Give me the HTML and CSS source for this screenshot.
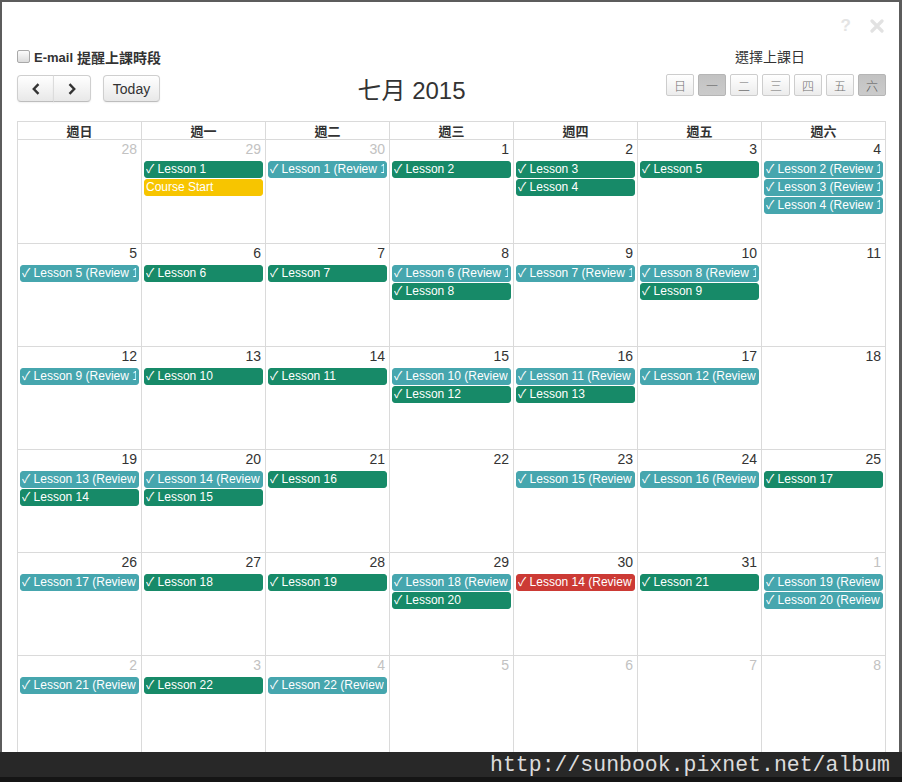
FILE: index.html
```html
<!DOCTYPE html>
<html lang="zh-Hant">
<head>
<meta charset="utf-8">
<title>選擇上課日</title>
<link rel="stylesheet" href="styles.css">
</head>
<body>
<div class="modal">
  <div class="topbar">
    <span class="help">?</span>
    <svg class="close" width="14" height="14" viewBox="0 0 14 14"><path d="M2 2L12 12M12 2L2 12" stroke="#e2e2e2" stroke-width="3.2" stroke-linecap="round"/></svg>
  </div>
  <div class="toolbar">
    <div class="tb-left">
      <label class="remind"><span class="cb"></span><b>E-mail</b> 提醒上課時段</label>
      <div class="navrow">
        <div class="group">
          <span class="btn nav"><svg width="8" height="12" viewBox="0 0 8 12"><path d="M6.5 1.2L1.8 6L6.5 10.8" fill="none" stroke="#333" stroke-width="2.4"/></svg></span>
          <span class="btn nav"><svg width="8" height="12" viewBox="0 0 8 12"><path d="M1.5 1.2L6.2 6L1.5 10.8" fill="none" stroke="#333" stroke-width="2.4"/></svg></span>
        </div>
        <span class="btn today">Today</span>
      </div>
    </div>
    <h2 class="title">七月 2015</h2>
    <div class="tb-right">
      <div class="pick-label">選擇上課日</div>
      <div class="days">
        <span class="dbtn">日</span>
        <span class="dbtn on">一</span>
        <span class="dbtn">二</span>
        <span class="dbtn">三</span>
        <span class="dbtn">四</span>
        <span class="dbtn">五</span>
        <span class="dbtn on">六</span>
      </div>
    </div>
  </div>

  <div class="cal">
    <div class="th">週日</div><div class="th">週一</div><div class="th">週二</div><div class="th">週三</div><div class="th">週四</div><div class="th">週五</div><div class="th">週六</div>

    <div class="day other"><div class="num">28</div></div>
    <div class="day other"><div class="num">29</div><div class="ev g"><span class="tx">✓ Lesson 1</span></div><div class="ev y"><span class="tx">Course Start</span></div></div>
    <div class="day other"><div class="num">30</div><div class="ev t"><span class="tx">✓ Lesson 1 (Review 1)</span></div></div>
    <div class="day"><div class="num">1</div><div class="ev g"><span class="tx">✓ Lesson 2</span></div></div>
    <div class="day"><div class="num">2</div><div class="ev g"><span class="tx">✓ Lesson 3</span></div><div class="ev g"><span class="tx">✓ Lesson 4</span></div></div>
    <div class="day"><div class="num">3</div><div class="ev g"><span class="tx">✓ Lesson 5</span></div></div>
    <div class="day"><div class="num">4</div><div class="ev t"><span class="tx">✓ Lesson 2 (Review 1)</span></div><div class="ev t"><span class="tx">✓ Lesson 3 (Review 1)</span></div><div class="ev t"><span class="tx">✓ Lesson 4 (Review 1)</span></div></div>

    <div class="day"><div class="num">5</div><div class="ev t"><span class="tx">✓ Lesson 5 (Review 1)</span></div></div>
    <div class="day"><div class="num">6</div><div class="ev g"><span class="tx">✓ Lesson 6</span></div></div>
    <div class="day"><div class="num">7</div><div class="ev g"><span class="tx">✓ Lesson 7</span></div></div>
    <div class="day"><div class="num">8</div><div class="ev t"><span class="tx">✓ Lesson 6 (Review 1)</span></div><div class="ev g"><span class="tx">✓ Lesson 8</span></div></div>
    <div class="day"><div class="num">9</div><div class="ev t"><span class="tx">✓ Lesson 7 (Review 1)</span></div></div>
    <div class="day"><div class="num">10</div><div class="ev t"><span class="tx">✓ Lesson 8 (Review 1)</span></div><div class="ev g"><span class="tx">✓ Lesson 9</span></div></div>
    <div class="day"><div class="num">11</div></div>

    <div class="day"><div class="num">12</div><div class="ev t"><span class="tx">✓ Lesson 9 (Review 1)</span></div></div>
    <div class="day"><div class="num">13</div><div class="ev g"><span class="tx">✓ Lesson 10</span></div></div>
    <div class="day"><div class="num">14</div><div class="ev g"><span class="tx">✓ Lesson 11</span></div></div>
    <div class="day"><div class="num">15</div><div class="ev t"><span class="tx">✓ Lesson 10 (Review 1)</span></div><div class="ev g"><span class="tx">✓ Lesson 12</span></div></div>
    <div class="day"><div class="num">16</div><div class="ev t"><span class="tx">✓ Lesson 11 (Review 1)</span></div><div class="ev g"><span class="tx">✓ Lesson 13</span></div></div>
    <div class="day"><div class="num">17</div><div class="ev t"><span class="tx">✓ Lesson 12 (Review 1)</span></div></div>
    <div class="day"><div class="num">18</div></div>

    <div class="day"><div class="num">19</div><div class="ev t"><span class="tx">✓ Lesson 13 (Review 1)</span></div><div class="ev g"><span class="tx">✓ Lesson 14</span></div></div>
    <div class="day"><div class="num">20</div><div class="ev t"><span class="tx">✓ Lesson 14 (Review 1)</span></div><div class="ev g"><span class="tx">✓ Lesson 15</span></div></div>
    <div class="day"><div class="num">21</div><div class="ev g"><span class="tx">✓ Lesson 16</span></div></div>
    <div class="day"><div class="num">22</div></div>
    <div class="day"><div class="num">23</div><div class="ev t"><span class="tx">✓ Lesson 15 (Review 1)</span></div></div>
    <div class="day"><div class="num">24</div><div class="ev t"><span class="tx">✓ Lesson 16 (Review 1)</span></div></div>
    <div class="day"><div class="num">25</div><div class="ev g"><span class="tx">✓ Lesson 17</span></div></div>

    <div class="day"><div class="num">26</div><div class="ev t"><span class="tx">✓ Lesson 17 (Review 1)</span></div></div>
    <div class="day"><div class="num">27</div><div class="ev g"><span class="tx">✓ Lesson 18</span></div></div>
    <div class="day"><div class="num">28</div><div class="ev g"><span class="tx">✓ Lesson 19</span></div></div>
    <div class="day"><div class="num">29</div><div class="ev t"><span class="tx">✓ Lesson 18 (Review 1)</span></div><div class="ev g"><span class="tx">✓ Lesson 20</span></div></div>
    <div class="day"><div class="num">30</div><div class="ev r"><span class="tx">✓ Lesson 14 (Review 1)</span></div></div>
    <div class="day"><div class="num">31</div><div class="ev g"><span class="tx">✓ Lesson 21</span></div></div>
    <div class="day other"><div class="num">1</div><div class="ev t"><span class="tx">✓ Lesson 19 (Review 1)</span></div><div class="ev t"><span class="tx">✓ Lesson 20 (Review 1)</span></div></div>

    <div class="day other"><div class="num">2</div><div class="ev t"><span class="tx">✓ Lesson 21 (Review 1)</span></div></div>
    <div class="day other"><div class="num">3</div><div class="ev g"><span class="tx">✓ Lesson 22</span></div></div>
    <div class="day other"><div class="num">4</div><div class="ev t"><span class="tx">✓ Lesson 22 (Review 1)</span></div></div>
    <div class="day other"><div class="num">5</div></div>
    <div class="day other"><div class="num">6</div></div>
    <div class="day other"><div class="num">7</div></div>
    <div class="day other"><div class="num">8</div></div>
  </div>
</div>
<div class="watermark">http://sunbook.pixnet.net/album</div>
</body>
</html>
```

FILE: styles.css
```css
* { box-sizing: border-box; }
html, body { margin: 0; padding: 0; }
body {
  width: 902px;
  height: 782px;
  overflow: hidden;
  background: #5c5c5c;
  position: relative;
  font-family: "Liberation Sans", Arial, "Noto Sans CJK TC", sans-serif;
  color: #333;
}
.modal {
  margin: 2px 3px 0 2px;
  height: 780px;
  background: #fff;
  overflow: hidden;
  padding: 0 14px 0 15px;
}
.topbar {
  height: 45px;
  display: flex;
  justify-content: flex-end;
  align-items: flex-start;
  gap: 19px;
  padding: 14px 0 0 0;
}
.help {
  font-size: 17px;
  font-weight: bold;
  color: #e4e4e4;
  line-height: 20px;
}
.close { margin-top: 3px; margin-right: 1px; }

.toolbar {
  display: grid;
  grid-template-columns: auto 1fr auto;
  align-items: start;
  height: 74px;
}
.remind {
  display: flex;
  align-items: center;
  height: 18px;
  margin-top: 1px;
  font-size: 14px;
  font-weight: bold;
  color: #333;
}
.remind b { margin-right: 4px; font-size: 13px; }
.cb {
  width: 13px;
  height: 13px;
  border: 1px solid #a9a9a9;
  border-radius: 2px;
  background: linear-gradient(#fcfcfc, #dcdcdc);
  margin-right: 4px;
  margin-top: -2px;
}
.navrow { display: flex; margin-top: 9px; gap: 12px; }
.group { display: flex; }
.btn {
  height: 27px;
  display: flex;
  align-items: center;
  justify-content: center;
  border: 1px solid #cfcfcf;
  border-bottom-color: #bdbdbd;
  background: linear-gradient(#ffffff, #e8e8e8);
  border-radius: 4px;
  box-shadow: 0 1px 2px rgba(0,0,0,.06);
  font-size: 14px;
  color: #333;
}
.nav { width: 37px; }
.group .nav:first-child { border-radius: 4px 0 0 4px; }
.group .nav:last-child { border-radius: 0 4px 4px 0; border-left-color: #dcdcdc; margin-left: -1px; width: 38px; }
.today { width: 57px; }

.title {
  margin: 30px 0 0 -4px;
  font-size: 24px;
  font-weight: normal;
  line-height: 28px;
  text-align: center;
  color: #333;
}
.tb-right { display: flex; flex-direction: column; align-items: center; margin-right: -1px; }
.pick-label {
  font-size: 14px;
  line-height: 18px;
  margin-left: -12px;
  color: #333;
  font-family: "Noto Sans CJK TC", sans-serif;
}
.days { display: flex; gap: 4px; margin-top: 9px; }
.dbtn {
  width: 28px;
  height: 22px;
  display: flex;
  align-items: center;
  justify-content: center;
  border: 1px solid #cdcdcd;
  border-radius: 2px;
  background: linear-gradient(#ffffff, #ececec);
  font-size: 12px;
  color: #6f6f6f;
  font-family: "Noto Sans CJK TC", sans-serif;
  font-weight: 300;
}
.dbtn.on {
  background: linear-gradient(#c2c2c2, #cbcbcb);
  border-color: #b5b5b5;
  color: #555;
}

.cal {
  width: 869px;
  display: grid;
  grid-template-columns: repeat(7, 1fr);
  grid-template-rows: 17px 103px 102px 102px 102px 102px 102px;
  gap: 1px;
  padding: 1px;
  background: #dadada;
}
.th {
  background: #fff;
  text-align: center;
  font-size: 13px;
  line-height: 17px;
  font-weight: bold;
  color: #333;
  font-family: "Noto Sans CJK TC", sans-serif;
}
.day { background: #fff; overflow: hidden; }
.num {
  height: 21px;
  padding: 1px 4px 0 0;
  text-align: right;
  font-size: 14px;
  line-height: 17px;
  color: #333;
}
.other .num { color: #c2c2c2; }
.ev {
  height: 17px;
  margin: 0 2px 1px 2px;
  border: 1px solid;
  border-radius: 3px;
  padding: 0 2px 0 1px;
  font-size: 12px;
  line-height: 15px;
  color: #fff;
}
.tx {
  display: block;
  white-space: nowrap;
  overflow: hidden;
}
.ev.g { background: #178a68; border-color: #178a68; }
.ev.t { background: #46a6ae; border-color: #46a6ae; }
.ev.y { background: #f7c500; border-color: #f7c500; }
.ev.r { background: #cc3a35; border-color: #cc3a35; }

.watermark {
  position: absolute;
  left: 0;
  bottom: 0;
  width: 902px;
  height: 30px;
  background: #282828;
  border-bottom: 5px solid #151515;
  text-align: right;
  padding-right: 12px;
  font-family: "Liberation Mono", "Courier New", monospace;
  font-size: 21.5px;
  line-height: 27px;
  color: #dcdcdc;
}
```
